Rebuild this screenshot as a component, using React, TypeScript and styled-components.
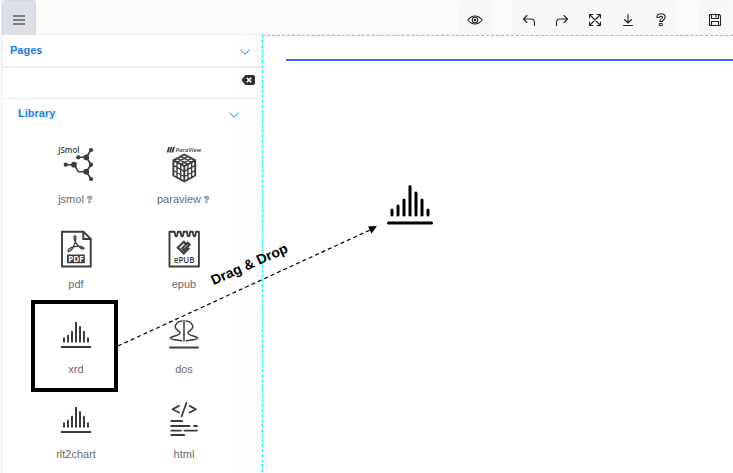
import React from "react";
import styled, { createGlobalStyle } from "styled-components";

const GlobalStyle = createGlobalStyle`
  * { box-sizing: border-box; }
  body {
    margin: 0;
    background: #fff;
    font-family: "Liberation Sans", Arial, sans-serif;
    font-size: 11px;
    overflow: hidden;
  }
  button {
    border: 0;
    padding: 0;
    margin: 0;
    background: none;
    font: inherit;
    color: inherit;
    cursor: pointer;
  }
`;

const Page = styled.div`
  position: relative;
  display: flex;
  flex-direction: column;
  min-height: 100vh;
  margin-left: 1px;
  border-left: 1px solid #ebebeb;
`;

const Toolbar = styled.header`
  display: flex;
  align-items: stretch;
  height: 35px;
  padding-right: 2px;
  gap: 21px;
  background: #fbfbfb;
  box-shadow: inset 0 -1px 0 #ebebeb;
`;

const MenuButton = styled.button`
  display: grid;
  place-items: center;
  width: 34px;
  margin-right: auto;
  padding-top: 4px;
  background: #dbe0e6;
  border: 1px solid #d0d8e1;
  border-bottom: 0;
  border-radius: 4px 4px 0 0;
  color: #7c8082;
`;

const ToolGroup = styled.div`
  display: flex;
  background: #f7f9f9;
  border-radius: 4px 4px 0 0;
`;

const ToolButton = styled.button`
  display: grid;
  place-items: center;
  width: 33px;
  padding-top: 5px;
  color: #212529;
`;

const Body = styled.div`
  display: flex;
  flex: 1;
`;

const Sidebar = styled.aside`
  display: flex;
  flex-direction: column;
  flex: none;
  width: 260px;
  background: linear-gradient(to right, #fff 230px, #fcfcfc);
  border-right: 1px solid #eee;
`;

const SectionHeader = styled.button<{ $nested?: boolean }>`
  display: flex;
  align-items: center;
  justify-content: space-between;
  height: ${(p) => (p.$nested ? "29px" : "31px")};
  padding: ${(p) => (p.$nested ? "0 22px 2px 16px" : "0 11px 2px 8px")};
  color: #187df2;
  font-weight: bold;
  line-height: 14px;
  svg { margin-top: 5px; }
`;

const SearchRow = styled.div`
  display: flex;
  height: 33px;
  padding-right: 6px;
  border-top: 2px solid #eee;
  border-bottom: 1px solid #ebebeb;
`;

const SearchInput = styled.input`
  flex: 1;
  min-width: 0;
  border: 0;
  outline: 0;
  padding: 0 8px;
  background: transparent;
  font: inherit;
`;

const ClearButton = styled.button`
  display: grid;
  place-items: center;
  padding-bottom: 6px;
  color: #2b2e31;
`;

const Library = styled.div`
  display: grid;
  grid-template-columns: 1fr 1fr;
  padding: 9px 23px 0 20px;
`;

const Widget = styled.button<{ $marked?: boolean }>`
  position: relative;
  display: flex;
  flex-direction: column;
  align-items: center;
  gap: 8px;
  height: 85px;
  padding-top: 10px;
  color: #3b3b3b;
  ${(p) =>
    p.$marked &&
    `&::after {
      content: "";
      position: absolute;
      inset: -7px 12px 0 9px;
      border: 4px solid #000;
    }`}
`;

const WidgetLabel = styled.span`
  display: flex;
  align-items: center;
  gap: 1px;
  color: #6a6a6a;
  line-height: 16px;
`;

const Canvas = styled.main`
  position: relative;
  flex: 1;
  min-width: 0;
  border-left: 1px dashed #00ffff;
  border-top: 1px dashed #00ffff;
`;

const Rule = styled.hr`
  margin: 23px 0 0 23px;
  border: 0;
  height: 2px;
  background: #4169e1;
`;

const Dropped = styled.div`
  position: absolute;
  left: 120px;
  top: 142px;
  color: #000;
`;

const DragPath = styled.svg`
  position: absolute;
  left: 116px;
  top: 220px;
  pointer-events: none;
`;

const DragLabel = styled.span`
  position: absolute;
  left: 206px;
  top: 256px;
  font-size: 14px;
  font-weight: bold;
  line-height: 16px;
  white-space: nowrap;
  color: #000;
  transform: rotate(-24deg);
`;

const Drawing = styled.svg`
  display: block;
  overflow: visible;
  fill: none;
  stroke: currentColor;
`;

const DrawingText = styled.text`
  fill: currentColor;
  stroke: none;
  font-family: "Open Sans", sans-serif;
  font-weight: 600;
`;

const KnockoutText = styled(DrawingText)`
  fill: #fff;
  font-weight: bold;
`;

type ArtProps = { children: React.ReactNode; size?: number; box?: number; weight?: number };

const Art = ({ children, size = 36, box = 36, weight = 1.6 }: ArtProps) => (
  <Drawing
    width={size}
    height={size}
    viewBox={`0 0 ${box} ${box}`}
    strokeWidth={weight}
    strokeLinecap="round"
    strokeLinejoin="round"
    aria-hidden="true"
  >
    {children}
  </Drawing>
);

const Chevron = () => (
  <Drawing width={10} height={6} viewBox="0 0 10 6" strokeWidth={1} aria-hidden="true">
    <path d="M.5.7 5 5.2 9.5.7" />
  </Drawing>
);

const QuestionShape = ({ inner }: { inner: string }) => (
  <>
    <path d="M5.2 6V5.2C5.2 3.6 6.4 3 8 3S10.900 3.800 10.900 5.300C10.900 7.300 8 7 8 9.900" strokeWidth={3.6} strokeLinecap="butt" />
    <path d="M5.2 5.2C5.2 3.6 6.4 3 8 3S10.900 3.800 10.900 5.300C10.900 7.300 8 7 8 9" stroke={inner} strokeWidth={1.3} strokeLinecap="butt" />
    <rect x="6.7" y="11.6" width="2.6" height="2" strokeWidth="1" />
  </>
);

const HelpMark = () => (
  <Art size={9} box={16} weight={1.2}>
    <QuestionShape inner="#fff" />
  </Art>
);

const HistogramArt = ({ size = 36 }: { size?: number }) => (
  <Art size={size} box={54} weight={3}>
    <path d="M9 32v5M15 28v9M21 22v15M27 8.5V37M33 15v22M39 22v15M45 32v5M5.500 45h43" />
  </Art>
);

const MoleculeArt = () => (
  <Art>
    <DrawingText x="0" y="5.6" fontSize="8">JSmol</DrawingText>
    <path d="M7.7 17.7H16l4.3 7h8L33 32M20.3 10.3h8L33 3M28.3 10.3l4.7 7.4-4.7 7" />
    <g fill="currentColor" stroke="none">
      <circle cx="7.7" cy="17.7" r="2.1" />
      <circle cx="16" cy="17.7" r="2.9" />
      <circle cx="20.3" cy="10.3" r="2.1" />
      <circle cx="28.3" cy="10.3" r="2.9" />
      <circle cx="33" cy="3" r="2.1" />
      <circle cx="33" cy="17.7" r="2.1" />
      <circle cx="28.3" cy="24.7" r="2.9" />
      <circle cx="33" cy="32" r="2.1" />
    </g>
  </Art>
);

const CubeArt = () => (
  <Art>
    <path d="M2.3 0h1.7L2.500 5.500H.6zM4.700 0h1.600L4.800 5.500H3.100zM7 0h1.900L7.400 5.500H5.500z" fill="currentColor" stroke="none" />
    <DrawingText x="9.500" y="4.600" fontSize="6" fontStyle="italic">ParaView</DrawingText>
    <path d="M18.3 7.500 29.200 13.3v15.200L18.3 34.500 7.400 28.500V13.3zM7.400 13.3l10.900 5.900 10.900-5.900M18.3 19.2v15.300" strokeWidth="1.9" />
    <path
      d="M11 11.4l10.900 5.9M14.700 9.4l10.900 5.9M25.6 11.4l-10.900 5.9M21.900 9.4 11 15.300M11 15.300v15.200M14.700 17.300v15.200M21.900 17.300v15.200M25.600 15.300v15.200M7.400 18.400l10.900 5.900 10.900-5.900M7.400 23.500l10.900 5.900 10.900-5.900"
      strokeWidth="1.4"
    />
  </Art>
);

const PdfArt = () => (
  <Art weight={1.9}>
    <path d="M4-.2h21.500l7.200 7v27.700H4z" strokeLinejoin="miter" />
    <path d="M25.300 0v7h7.200" />
    <path
      d="M17 3.800c-1.800.2-1.100 4 1.300 7.600 2.200 3.200 5.600 6 7.200 5.400 1.600-.8-2-2.900-6.800-2.500-4.300.3-8.600 2.300-8.600 4.500 0 2 3.400.2 5.500-4.300C17.800 10 18.600 4 17 3.800z"
      strokeWidth="1.3"
    />
    <path d="M9 22.500h17.800v8.700H9z" fill="currentColor" stroke="none" />
    <KnockoutText x="17.900" y="29.600" fontSize="8" textAnchor="middle">PDF</KnockoutText>
  </Art>
);

const EpubArt = () => (
  <Art weight={1.9}>
    <path d="M3.500-.2v34.700h29.400V-.2H30l-.6 3.500q-1 2-2 0L26.800-.2h-2.600l-.6 3.500q-1 2-2 0L21-.2h-3.300l-.6 3.500q-1 2-2 0L14.500-.2h-2.700l-.6 3.500q-1 2-2 0L8.600-.2z" />
    <path
      d="m20.300 12.200-2.500-2.400-6 5.900 6 5.800 5.500-5.400M15.300 15.700l2.600 2.500 5.700-5.500-1.900-1.900-5 4.900"
      strokeWidth="2.100"
      strokeLinejoin="miter"
      strokeLinecap="butt"
    />
    <DrawingText x="18.200" y="30.800" fontSize="8" textAnchor="middle">ePUB</DrawingText>
  </Art>
);

const DensityArt = () => (
  <Art weight={1.5}>
    <path d="M18 3.500V24M15.800 4C12 4.500 9.300 7 9.300 10c0 3.700 4.700 3.200 4.700 5.800 0 3.400-9.600 3.400-9.600 5.200 0 1.500 6.400 2 11.200 2.800M20.200 4C24 4.500 26.700 7 26.700 10c0 3.700-4.700 3.200-4.700 5.800 0 3.400 9.600 3.400 9.600 5.200 0 1.500-6.400 2-11.200 2.800" />
    <path d="M4 30.400h28" strokeWidth="2" />
  </Art>
);

const CodeArt = () => (
  <Art weight={1.8}>
    <path d="M13 3.900 6.500 7.200l6.500 3.300M23.500 3.900 30 7.200l-6.500 3.300M20.500.7l-5 13.800" />
    <path d="M5.200 19h11M5.200 24h18.300M28 24h3M5.200 28.600H15M18.500 28.600H31M5.200 33h13" />
  </Art>
);

const widgets = [
  { name: "jsmol", art: <MoleculeArt />, help: true },
  { name: "paraview", art: <CubeArt />, help: true },
  { name: "pdf", art: <PdfArt /> },
  { name: "epub", art: <EpubArt /> },
  { name: "xrd", art: <HistogramArt />, marked: true },
  { name: "dos", art: <DensityArt /> },
  { name: "rlt2chart", art: <HistogramArt /> },
  { name: "html", art: <CodeArt /> },
];

const toolGroups = [
  [
    {
      name: "Preview",
      icon: (
        <>
          <path d="M.8 8Q4 4 8 4T15.200 8Q12 12 8 12T.8 8z" />
          <circle cx="8" cy="8" r="2.800" />
          <circle cx="8" cy="8" r=".7" fill="currentColor" />
        </>
      ),
    },
  ],
  [
    { name: "Undo", icon: <path d="M6 3.500 2.500 7 6 10.500M2.500 7H10q3.500 0 3.500 3.500v3" /> },
    { name: "Redo", icon: <path d="M10 3.500 13.500 7 10 10.500M13.500 7H6q-3.500 0-3.500 3.500v3" /> },
    {
      name: "Full screen",
      icon: <path d="m2.500 2.500 11 11M13.500 2.500l-11 11M2.500 6V2.500H6M10 2.500h3.500V6M13.500 10v3.500H10M6 13.500H2.500V10" />,
    },
    { name: "Download", icon: <path d="M8 2.500V11M4.500 7.500 8 11l3.500-3.500M3.500 13.500h9" /> },
    { name: "Help", icon: <QuestionShape inner="#f7f9f9" /> },
  ],
  [
    {
      name: "Save",
      icon: (
        <>
          <path d="M2.500 2.500h9.700l1.300 1.300v9.700h-11zM4.500 2.500v4h7v-4M4.500 13.500v-4h7v4" />
          <path d="M9 3v2" />
        </>
      ),
    },
  ],
];

export default function App() {
  return (
    <>
      <GlobalStyle />
      <Page>
        <Toolbar>
          <MenuButton aria-label="Menu">
            <Drawing width={12} height={10} viewBox="0 0 12 10" strokeWidth={2} aria-hidden="true">
              <path d="M0 1h12M0 5h12M0 9h12" />
            </Drawing>
          </MenuButton>
          {toolGroups.map((group) => (
            <ToolGroup key={group[0].name}>
              {group.map((tool) => (
                <ToolButton key={tool.name} aria-label={tool.name}>
                  <Art size={16} box={16} weight={1.1}>{tool.icon}</Art>
                </ToolButton>
              ))}
            </ToolGroup>
          ))}
        </Toolbar>
        <Body>
          <Sidebar>
            <SectionHeader aria-expanded={false}>
              Pages
              <Chevron />
            </SectionHeader>
            <SearchRow>
              <SearchInput type="text" aria-label="Search library" />
              <ClearButton aria-label="Clear search">
                <Drawing width={14} height={10} viewBox="0 0 14 10" aria-hidden="true">
                  <path d="M4.500.5H12q1.500 0 1.500 1.500v6q0 1.500-1.500 1.500H4.500L.8 5z" fill="currentColor" />
                  <path d="m5.800 2.800 4.400 4.400M10.200 2.800 5.800 7.200" stroke="#fff" strokeWidth="1.600" />
                </Drawing>
              </ClearButton>
            </SearchRow>
            <SectionHeader $nested aria-expanded>
              Library
              <Chevron />
            </SectionHeader>
            <Library>
              {widgets.map((widget) => (
                <Widget key={widget.name} $marked={widget.marked} draggable>
                  {widget.art}
                  <WidgetLabel>
                    {widget.name}
                    {widget.help && <HelpMark />}
                  </WidgetLabel>
                </Widget>
              ))}
            </Library>
          </Sidebar>
          <Canvas>
            <Rule />
            <Dropped>
              <HistogramArt size={54} />
            </Dropped>
          </Canvas>
        </Body>
        <DragPath width="262" height="130" viewBox="0 0 262 130" aria-hidden="true">
          <path d="M0 126 252 10" fill="none" stroke="#000" strokeWidth="1.200" strokeDasharray="4 3" />
          <path d="m259 6-5.500 7.500L250 6.500z" fill="#000" />
        </DragPath>
        <DragLabel>Drag &amp; Drop</DragLabel>
      </Page>
    </>
  );
}
